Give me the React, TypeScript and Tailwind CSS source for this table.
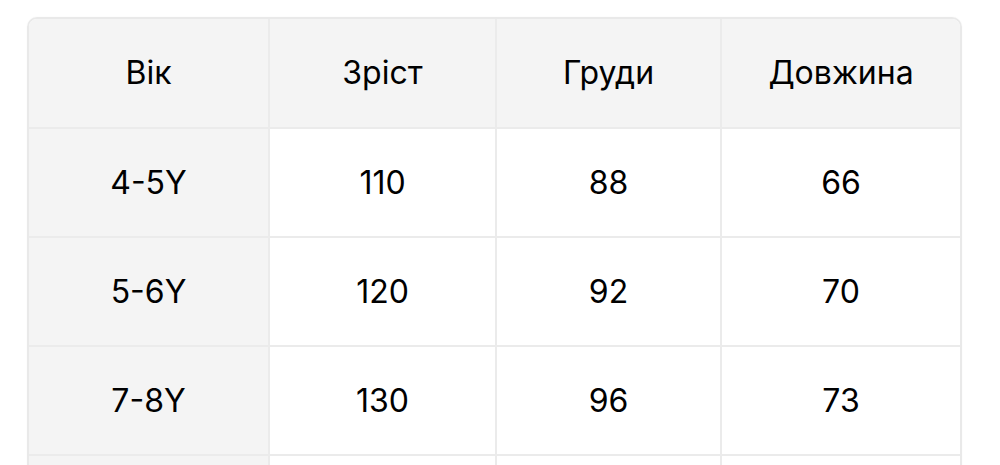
import React from 'react';

const headers = ['Вік', 'Зріст', 'Груди', 'Довжина'];

const rows = [
  ['4-5Y', '110', '88', '66'],
  ['5-6Y', '120', '92', '70'],
  ['7-8Y', '130', '96', '73'],
];

const App: React.FC = () => {
  return (
    <div className="w-[1000px] h-[465px] overflow-hidden bg-white pt-[17px] pl-[27px]" style={{ fontFamily: 'Inter, "Noto Sans", sans-serif' }}>
      <div className="w-[935px] rounded-[10px] border-2 border-[#e9e9e9] overflow-hidden shadow-[0_0_2px_rgba(0,0,0,0.04)]">
        <div className="grid grid-cols-[241px_227px_225px_238px] text-[32px] text-black">
          {headers.map((h, i) => (
            <div
              key={h}
              className={`h-[110px] bg-[#f4f4f4] flex items-center justify-center border-b-2 border-[#ebebeb] ${i < 3 ? 'border-r-2' : ''}`}
            >
              {h}
            </div>
          ))}
          {rows.map((r) =>
            r.map((c, i) => (
              <div
                key={r[0] + i}
                className={`h-[109px] flex items-center justify-center border-b-2 border-[#ebebeb] ${i === 0 ? 'bg-[#f4f4f4]' : 'bg-white'} ${i < 3 ? 'border-r-2' : ''}`}
              >
                {c}
              </div>
            ))
          )}
          {[0, 1, 2, 3].map((i) => (
            <div
              key={'tail' + i}
              className={`h-[40px] ${i === 0 ? 'bg-[#f4f4f4]' : 'bg-white'} ${i < 3 ? 'border-r-2 border-[#ebebeb]' : ''}`}
            />
          ))}
        </div>
      </div>
    </div>
  );
};

export default App;
